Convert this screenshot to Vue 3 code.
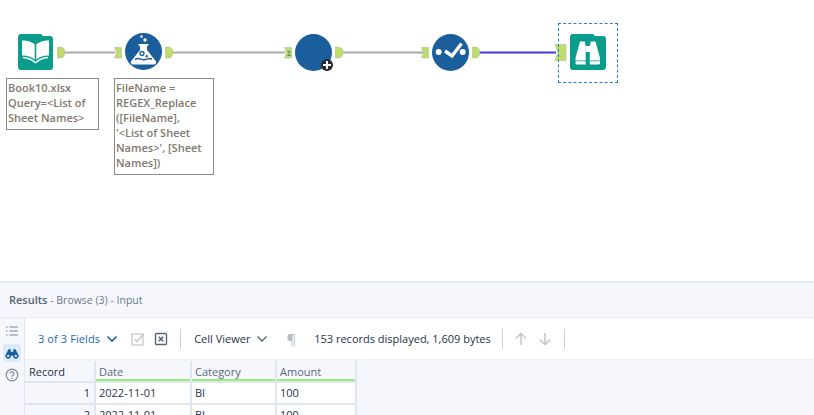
<script setup>
const rows = [
  { id: 1, date: '2022-11-01', cat: 'BI', amt: 100 },
  { id: 2, date: '2022-11-01', cat: 'BI', amt: 100 },
]
</script>

<template>
  <div class="app">
    <section class="canvas">
      <svg class="wires" width="814" height="281" viewBox="0 0 814 281">
        <path d="M64 52.500H115M172 52.500H285M343 52.500H423" stroke="#aaaaaa" stroke-width="2" fill="none" />
        <path d="M479 52.500H556" stroke="#3a3ae8" stroke-width="2" fill="none" />
        <g fill="#bfdc6c" stroke="#a3b98a" stroke-width=".5">
          <path d="M57.500 47h3a4.500 5.500 0 0 1 0 11h-3z" />
          <path d="M165.500 47h3a4.500 5.500 0 0 1 0 11h-3z" />
          <path d="M335.500 47h3a4.500 5.500 0 0 1 0 11h-3z" />
          <path d="M472.500 47h3a4.500 5.500 0 0 1 0 11h-3z" />
          <path d="M114.500 47.500h7v10.500h-7l2-5.250z" />
          <path d="M284.500 47.500h7v10.500h-7l2-5.250z" />
          <path d="M421.500 47.500h7v10.500h-7l2-5.250z" />
          <path d="M555 44.500h11v16h-11l3-8z" />
        </g>
        <text x="287" y="56" class="tiny">Σ</text>
      </svg>

      <svg class="node n-book" width="35" height="36" viewBox="0 0 35 36">
        <path d="M0 3a3 3 0 0 1 3-3h20l2 2h7a3 3 0 0 1 3 3v28a3 3 0 0 1-3 3H3a3 3 0 0 1-3-3z" fill="#0a9d8c" />
        <path d="M16.700 10.500C14 7.800 8.500 6.300 4 6.500v15c4.500-.2 9.500 1.200 12.700 4zM18.300 10.500c2.700-2.700 8.200-4.200 12.700-4v15c-4.500-.2-9.500 1.200-12.700 4z" fill="#fff" />
        <path d="M5 23.500c4.500.2 9 2 12.500 5.300C21 25.500 25.500 23.700 30 23.500" fill="none" stroke="#fff" stroke-width="1.400" />
      </svg>

      <svg class="node n-flask" width="37" height="37" viewBox="0 0 37 37">
        <circle cx="18.500" cy="18.500" r="18.500" fill="#1a5e9b" />
        <circle cx="16.500" cy="3.500" r="1.200" fill="#fff" />
        <circle cx="20" cy="7" r="1.700" fill="#fff" />
        <path d="M13.500 11h10v1.800h-1.500v4.200l8.700 11c1.200 2-.3 3.500-2.200 3.500H8.500c-1.900 0-3.400-1.500-2.200-3.500L15 17v-4.200h-1.500z" fill="#fff" />
        <path d="M10 26.500c4-2.500 6 .5 9 .2s4-1.700 8-.7" fill="none" stroke="#1a5e9b" stroke-width="1.500" />
        <circle cx="17" cy="20.500" r="2" fill="none" stroke="#1a5e9b" stroke-width="1.300" />
        <circle cx="21.800" cy="23.300" r="1.200" fill="#1a5e9b" />
      </svg>

      <div class="node n-blank"><span class="plus"></span></div>

      <svg class="node n-check" width="37" height="37" viewBox="0 0 37 37">
        <circle cx="18.500" cy="18.500" r="18.500" fill="#1a5e9b" />
        <circle cx="6.700" cy="18" r="3" fill="#fff" />
        <circle cx="30.700" cy="18" r="3" fill="#fff" />
        <path d="M13 17l7 5L29.500 9.500" fill="none" stroke="#fff" stroke-width="3.400" />
      </svg>

      <div class="selection"></div>

      <svg class="node n-browse" width="36" height="36" viewBox="0 0 36 36">
        <path d="M0 3a3 3 0 0 1 3-3h20l2 2h8a3 3 0 0 1 3 3v28a3 3 0 0 1-3 3H3a3 3 0 0 1-3-3z" fill="#0a9d8c" />
        <path d="M10 7.500h5v3h.7v20H6.500l-1-1V24zM25.500 7.500h-5v3h-.7v20h9.200l1-1V24z" fill="#fff" />
        <path d="M5 26.500h11v.8H5zM19.500 26.500h11v.8h-11z" fill="#0a9d8c" />
        <path d="M15.500 12h4.500v6h-4.500z" fill="#fff" />
      </svg>

      <div class="note note-a">Book10.xlsx<br />Query=&lt;List of<br />Sheet Names&gt;</div>
      <div class="note note-b">FileName =<br />REGEX_Replace<br />([FileName],<br />'&lt;List of Sheet<br />Names&gt;', [Sheet<br />Names])</div>
    </section>

    <section class="results">
      <header class="results-head"><b>Results</b><span> - Browse (3) - Input</span></header>
      <div class="results-body">
        <nav class="rail">
          <button class="rail-btn">
            <svg width="14" height="14" viewBox="0 0 14 14"><path d="M1 3h1.500M1 7h1.500M1 11h1.500M4.500 3H13M4.500 7H13M4.500 11H13" stroke="#7b8794" stroke-width="1.200" /></svg>
          </button>
          <button class="rail-btn active">
            <svg width="14" height="11" viewBox="0 0 16 12"><path d="M4 1h2.500v3h3V1H12l3.500 7a3.200 3.200 0 1 1-6.300.7H6.800A3.200 3.200 0 1 1 .5 8z" fill="#1a5e9b" /><circle cx="3.700" cy="8.700" r="1.400" fill="#d9e9f7" /><circle cx="12.300" cy="8.700" r="1.400" fill="#d9e9f7" /></svg>
          </button>
          <button class="rail-btn">
            <svg width="14" height="14" viewBox="0 0 14 14"><circle cx="7" cy="7" r="5.800" fill="none" stroke="#7b8794" stroke-width="1.200" /><path d="M5.200 5.500a1.800 1.800 0 1 1 2.800 1.500c-.7.400-1 .8-1 1.500" fill="none" stroke="#7b8794" stroke-width="1.200" /><circle cx="7" cy="10.300" r=".8" fill="#7b8794" /></svg>
          </button>
        </nav>
        <div class="main">
          <div class="toolbar">
            <span class="fields">3 of 3 Fields</span>
            <svg class="chev" width="12" height="8" viewBox="0 0 12 8"><path d="M1.500 1.500L6 6l4.500-4.500" fill="none" stroke="#1a5e9b" stroke-width="1.600" /></svg>
            <svg class="chk" width="14" height="14" viewBox="0 0 14 14"><rect x="1" y="2" width="11" height="11" fill="none" stroke="#c4c8cc" stroke-width="1.200" /><path d="M3.500 7l2.500 2.500L12.500 2" fill="none" stroke="#c4c8cc" stroke-width="1.400" /></svg>
            <svg class="unchk" width="14" height="14" viewBox="0 0 14 14"><rect x="1.500" y="1.500" width="11" height="11" rx="1" fill="none" stroke="#56677a" stroke-width="1.400" /><path d="M4.700 4.700l4.600 4.600M9.300 4.700l-4.600 4.600" stroke="#56677a" stroke-width="1.600" /></svg>
            <i class="sep sep-a"></i>
            <span class="viewer">Cell Viewer</span>
            <svg class="chev2" width="12" height="8" viewBox="0 0 12 8"><path d="M1.500 1.500L6 6l4.500-4.500" fill="none" stroke="#56677a" stroke-width="1.400" /></svg>
            <span class="pilcrow">¶</span>
            <span class="status">153 records displayed, 1,609 bytes</span>
            <i class="sep sep-b"></i>
            <svg class="arrow" width="14" height="14" viewBox="0 0 14 14"><path d="M7 13V2M2 6.500L7 1.500l5 5" fill="none" stroke="#c4c8cc" stroke-width="1.600" /></svg>
            <svg class="arrow2" width="14" height="14" viewBox="0 0 14 14"><path d="M7 1v11M2 7.500l5 5 5-5" fill="none" stroke="#c4c8cc" stroke-width="1.600" /></svg>
            <i class="sep sep-c"></i>
          </div>
          <div class="table">
            <div class="cell head rec">Record</div>
            <div class="cell head field">Date</div>
            <div class="cell head field">Category</div>
            <div class="cell head field">Amount</div>
            <template v-for="r in rows" :key="r.id">
              <div class="cell num">{{ r.id }}</div>
              <div class="cell val">{{ r.date }}</div>
              <div class="cell val">{{ r.cat }}</div>
              <div class="cell val">{{ r.amt }}</div>
            </template>
          </div>
        </div>
      </div>
    </section>
  </div>
</template>

<style>
html, body { margin: 0; background: #fff; overflow: hidden; }
</style>

<style scoped>
.app {
  width: 814px;
  height: 415px;
  overflow: hidden;
  display: flex;
  flex-direction: column;
  font-family: "Open Sans", "Noto Sans", sans-serif;
}
.canvas { position: relative; height: 281px; flex: none; background: #fff; }
.wires { position: absolute; left: 0; top: 0; }
.tiny { font: 7px "Liberation Sans", sans-serif; fill: #1a5e9b; }
.node { position: absolute; }
.n-book { left: 18px; top: 34px; }
.n-flask { left: 125px; top: 33px; }
.n-check { left: 432px; top: 34px; }
.n-browse { left: 570px; top: 34px; }
.n-blank { left: 295px; top: 34px; width: 37px; height: 37px; border-radius: 50%; background: #1a5e9b; }
.plus {
  position: absolute; left: 26px; top: 25px; width: 12px; height: 12px; border-radius: 50%;
  background:
    linear-gradient(#fff, #fff) center / 8px 2px no-repeat,
    linear-gradient(#fff, #fff) center / 2px 8px no-repeat,
    #2a2a2a;
}
.selection { position: absolute; left: 558px; top: 23px; width: 58px; height: 58px; border: 1px dashed #1f7fd0; }
.note {
  position: absolute; box-sizing: border-box;
  border: 1px solid #8a8a8a; background: #fff; color: #80796c;
  font: 600 11px/15px "Open Sans", sans-serif; padding: 1px 1px; white-space: nowrap;
}
.note-a { left: 6px; top: 78px; width: 93px; height: 52px; }
.note-b { left: 114px; top: 78px; width: 100px; height: 97px; }
.results { flex: 1; min-height: 0; display: flex; flex-direction: column; border-top: 2px solid #e2e7f2; background: #f5f7fc; }
.results-head { height: 35px; flex: none; box-sizing: border-box; padding-left: 9px; line-height: 34px; font-size: 10.5px; color: #6b7a8c; border-bottom: 1px solid #e2e7f2; }
.results-head b { color: #566273; font-weight: 600; font-size: 11px; }
.results-body { flex: 1; min-height: 0; display: flex; }
.rail { width: 25px; flex: none; box-sizing: border-box; border-right: 1px solid #e2e7f2; padding: 4px 3px 0; display: flex; flex-direction: column; }
.rail-btn { width: 18px; height: 18px; padding: 0; margin-bottom: 4px; border: 0; border-radius: 3px; background: none; display: flex; align-items: center; justify-content: center; }
.rail-btn.active { background: #dcebf9; }
.main { flex: 1; min-width: 0; display: flex; flex-direction: column; }
.toolbar { height: 42px; flex: none; background: #fff; display: flex; align-items: center; border-bottom: 1px solid #eef1f7; font-size: 11px; color: #26324a; box-sizing: border-box; }
.fields { margin-left: 13px; color: #1a67b8; letter-spacing: .1px; }
.chev { margin-left: 6px; }
.chk { margin-left: 13px; }
.unchk { margin-left: 9px; }
.sep { width: 1px; height: 20px; background: #c9d1dc; }
.sep-a { margin-left: 12px; }
.viewer { margin-left: 13px; }
.chev2 { margin-left: 6px; }
.pilcrow { margin-left: 18px; color: #b6bbc0; font-size: 15px; }
.status { margin-left: 18px; }
.sep-b { margin-left: 11px; }
.arrow { margin-left: 11px; }
.arrow2 { margin-left: 10px; }
.sep-c { margin-left: 12px; }
.table { display: grid; grid-template-columns: 71px 96px 85px 80px; width: 332px; margin-top: 1px; }
.cell { box-sizing: border-box; height: 22px; line-height: 20px; font-size: 11px; padding: 0 3px; border-right: 2px solid #dfe5f1; border-bottom: 2px solid #dfe5f1; color: #26324a; background: #fff; }
.head { background: #f5f7fc; line-height: 21px; }
.rec { padding-left: 4px; }
.field { color: #5a6880; box-shadow: inset 0 -2px 0 #98ee78; }
.num { text-align: right; background: #f5f7fc; padding-right: 4px; }
</style>
